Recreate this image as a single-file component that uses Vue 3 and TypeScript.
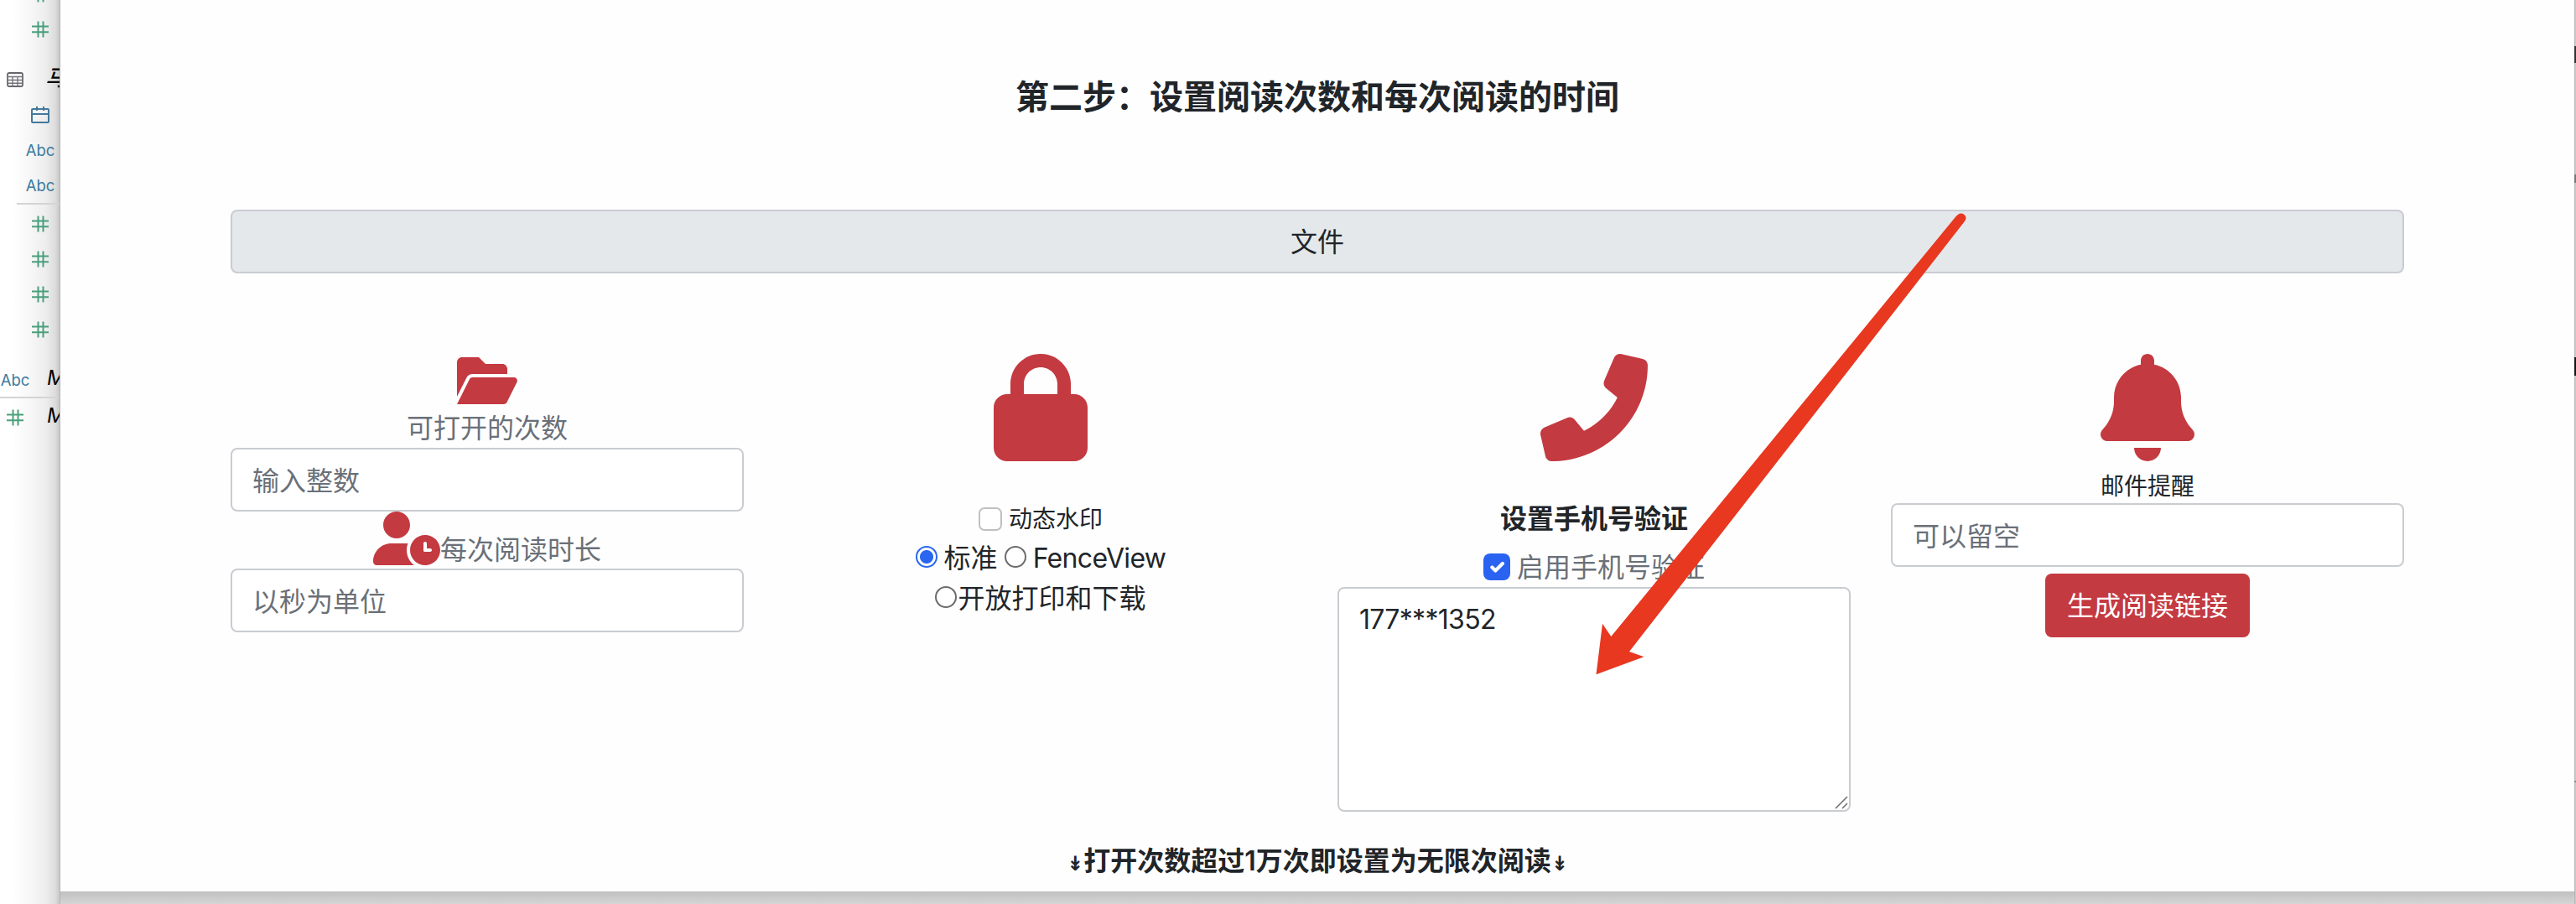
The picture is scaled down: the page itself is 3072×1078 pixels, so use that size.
<script setup lang="ts">
import { ref } from 'vue'

type FieldKind = 'hash' | 'abc' | 'date' | 'table' | 'rule' | 'gap'

interface FieldRow {
  kind: FieldKind
  height: number
  root?: boolean
  label?: string
}

const fields: FieldRow[] = [
  { kind: 'hash', height: 40 },
  { kind: 'hash', height: 43 },
  { kind: 'gap', height: 18 },
  { kind: 'table', height: 42, root: true, label: '马' },
  { kind: 'date', height: 42 },
  { kind: 'abc', height: 42 },
  { kind: 'abc', height: 42 },
  { kind: 'rule', height: 2 },
  { kind: 'gap', height: 2 },
  { kind: 'hash', height: 42 },
  { kind: 'hash', height: 42 },
  { kind: 'hash', height: 42 },
  { kind: 'hash', height: 42 },
  { kind: 'gap', height: 19 },
  { kind: 'abc', height: 40, root: true, label: 'M' },
  { kind: 'rule', height: 2, root: true },
  { kind: 'gap', height: 2 },
  { kind: 'hash', height: 42, root: true, label: 'M' },
]

const openCount = ref('')
const readSeconds = ref('')
const email = ref('')
const watermark = ref(false)
const verifyPhone = ref(true)
const phones = ref('177***1352')
const viewMode = ref<'standard' | 'fence' | 'print'>('standard')
</script>

<template>
  <div class="screen">
    <aside class="fields">
      <div
        v-for="(f, i) in fields"
        :key="i"
        class="field"
        :class="[f.kind, { root: f.root }]"
        :style="{ height: f.height + 'px' }"
      >
        <span v-if="f.kind !== 'gap' && f.kind !== 'rule'" class="glyph">
          <svg v-if="f.kind === 'hash'" width="20" height="20" viewBox="0 0 20 20">
            <path d="M7.5 .5v19M13.500 .5v19M0 6.500h20M0 13.300h20" stroke="#4a9f7c" stroke-width="2" fill="none" />
          </svg>
          <svg v-else-if="f.kind === 'date'" width="22" height="22" viewBox="0 0 22 22">
            <path d="M2 4h18q1 0 1 1v14q0 1-1 1H2q-1 0-1-1V5q0-1 1-1zM1 10h20M7 1v5M15 1v5" stroke="#43799a" stroke-width="2" fill="none" />
          </svg>
          <svg v-else-if="f.kind === 'table'" width="20" height="18" viewBox="0 0 20 18">
            <path d="M3 1h14q2 0 2 2v12q0 2-2 2H3q-2 0-2-2V3q0-2 2-2z" stroke="#69666b" stroke-width="1.800" fill="none" />
            <path d="M1 5.500h18M1 9.500h18M1 13.300h18M7 5v12M13 5v12" stroke="#77757a" stroke-width="1.400" />
          </svg>
          <span v-else class="abc-text">Abc</span>
        </span>
        <span v-if="f.label" class="name">{{ f.label }}</span>
      </div>
    </aside>

    <main class="dialog">
      <h4 class="title">第二步：设置阅读次数和每次阅读的时间</h4>
      <div class="file-bar">文件</div>

      <div class="columns">
        <section class="col">
          <svg class="icon folder" viewBox="0 0 576 512">
            <path d="M147.800 192H480V144C480 117.500 458.500 96 432 96h-160l-64-64h-160C21.490 32 0 53.490 0 80v328.400l90.540-181.100C101.400 205.600 123.400 192 147.800 192zM543.100 224H147.800C135.700 224 124.600 230.800 119.200 241.700L0 480h447.100c12.120 0 23.200-6.852 28.620-17.690l96-192C583.200 249 567.700 224 543.100 224z" />
          </svg>
          <div class="label">可打开的次数</div>
          <input v-model="openCount" class="control" placeholder="输入整数" />
          <div class="duration">
            <svg class="icon user" viewBox="0 0 640 512">
              <path d="M224 256c70.700 0 128-57.310 128-128S294.700 0 224 0C153.300 0 96 57.310 96 128S153.300 256 224 256zM320 368c0-22.500 4.200-44 11.900-63.800C316 303.300 290 304 274.700 304H173.300C77.610 304 0 381.600 0 477.300C0 496.500 15.520 512 34.660 512h357.400C348 480 320 427 320 368zM496 224c-79.600 0-144 64.400-144 144s64.400 144 144 144s144-64.400 144-144S575.600 224 496 224zM544 384h-54.300C484.400 384 480 379.600 480 374.300V304c0-8.800 7.200-16 16-16s16 7.200 16 16v48h32c8.800 0 16 7.200 16 16S552.800 384 544 384z" />
            </svg>
            <span class="label">每次阅读时长</span>
          </div>
          <input v-model="readSeconds" class="control" placeholder="以秒为单位" />
        </section>

        <section class="col">
          <svg class="icon lock" viewBox="0 0 448 512">
            <path d="M80 192V144C80 64.470 144.500 0 224 0C303.500 0 368 64.470 368 144V192H384C419.300 192 448 220.700 448 256V448C448 483.300 419.300 512 384 512H64C28.650 512 0 483.300 0 448V256C0 220.700 28.650 192 64 192H80zM144 192H304V144C304 99.820 268.200 64 224 64C179.800 64 144 99.820 144 144V192z" />
          </svg>
          <label class="choice watermark">
            <input v-model="watermark" type="checkbox" class="box" />
            <span>动态水印</span>
          </label>
          <div class="choices">
            <label class="choice">
              <input v-model="viewMode" type="radio" value="standard" class="radio" />
              <span>标准</span>
            </label>
            <label class="choice">
              <input v-model="viewMode" type="radio" value="fence" class="radio" />
              <span class="latin">FenceView</span>
            </label>
          </div>
          <label class="choice tight">
            <input v-model="viewMode" type="radio" value="print" class="radio" />
            <span>开放打印和下载</span>
          </label>
        </section>

        <section class="col">
          <svg class="icon phone" viewBox="0 0 512 512">
            <path d="M18.920 351.200l108.500-46.520c12.780-5.531 27.770-1.801 36.450 8.980l44.090 53.820c69.250-34 125.500-90.310 159.400-159.400l-53.810-44.040c-10.750-8.781-14.410-23.690-8.974-36.470l46.510-108.500c6.094-13.910 21.100-21.520 35.790-18.110l100.800 23.250c14.250 3.250 24.220 15.800 24.220 30.460c0 252.300-205.200 457.500-457.500 457.500c-14.670 0-27.180-9.968-30.450-24.220l-23.270-100.800C-2.571 372.400 5.018 357.200 18.920 351.200z" />
          </svg>
          <div class="heading">设置手机号验证</div>
          <label class="choice verify">
            <input v-model="verifyPhone" type="checkbox" class="toggle" />
            <span>启用手机号验证</span>
          </label>
          <div class="area">
            <textarea v-model="phones" class="control"></textarea>
            <svg class="grip" width="16" height="16" viewBox="0 0 16 16">
              <path d="M1 15L15 1M9 15l6-6" stroke="#6c6c6c" stroke-width="1.500" />
            </svg>
          </div>
        </section>

        <section class="col">
          <svg class="icon bell" viewBox="0 0 448 512">
            <path d="M256 32V51.200C329 66.030 384 130.600 384 208V226.800C384 273.900 401.300 319.200 432.500 354.400L439.900 362.700C448.300 372.200 450.400 385.600 445.200 397.100C440 408.600 428.600 416 416 416H32C19.400 416 7.971 408.600 2.809 397.100C-2.353 385.600-.2883 372.200 8.084 362.700L15.500 354.400C46.740 319.200 64 273.900 64 226.800V208C64 130.600 118.100 66.030 192 51.200V32C192 14.330 206.300 0 224 0C241.700 0 256 14.330 256 32zM224 512C207 512 190.700 505.300 178.700 493.300C166.700 481.300 160 464.100 160 448H288C288 464.100 281.300 481.300 269.300 493.300C257.300 505.300 240.100 512 224 512z" />
          </svg>
          <div class="mail-label">邮件提醒</div>
          <input v-model="email" class="control" placeholder="可以留空" />
          <button class="submit" type="button">生成阅读链接</button>
        </section>
      </div>

      <p class="note"><span class="arr">↡</span>打开次数超过1万次即设置为无限次阅读<span class="arr">↡</span></p>
    </main>

    <div class="edge">
      <i class="e1"></i><i class="e2"></i><i class="e3"></i><i class="e4"></i>
    </div>

    <svg class="pointer" width="460" height="580" viewBox="1900 240 460 580">
      <path d="M1903.500 804.300L1911 743.700L1921.300 759L2333 257.500Q2338 252.500 2342.500 256Q2346.500 259.500 2342.500 264.500L1943 777L1960.500 783.300Z" fill="#e83820" />
    </svg>
  </div>
</template>

<style>
body {
  margin: 0;
  background: #fff;
}
</style>

<style scoped>
.screen {
  position: relative;
  display: flex;
  width: 3072px;
  height: 1078px;
  overflow: hidden;
  background: linear-gradient(#c0c0c0 1063px, #d5d5d5 1078px);
  font-family: Inter, 'Noto Sans CJK SC', sans-serif;
  font-size: 32px;
  line-height: 48px;
  color: #212529;
}

.fields {
  box-sizing: border-box;
  width: 72px;
  height: 1078px;
  flex: none;
  overflow: hidden;
  background: linear-gradient(90deg, #fff 14px, #f7f7f7 36px, #eee 54px, #dcdcdc 66px, #cbcbcb 70px);
  border-right: 1px solid #b4b4b4;
}

.field {
  display: flex;
  align-items: center;
  width: 110px;
}

.field:first-child {
  margin-top: -27px;
}

.glyph {
  display: flex;
  justify-content: center;
  width: 36px;
  margin-left: 30px;
  flex: none;
}

.root .glyph {
  margin-left: 0;
}

.rule {
  margin-left: 20px;
  background: #d3d5d4;
}

.rule.root {
  margin-left: 0;
}

.abc-text {
  font: 18.500px/24px Inter, sans-serif;
  color: #3d7b9d;
}

.name {
  margin-left: 20px;
  padding-bottom: 4px;
  font-size: 24px;
  font-style: italic;
  color: #000;
}

.table .name {
  margin-left: 18px;
  font-size: 26px;
  font-weight: 500;
}

.dialog {
  box-sizing: border-box;
  width: 2998px;
  height: 1063px;
  padding: 92px 203px 0;
  flex: none;
  background: #fefefe;
  text-align: center;
}

.title {
  margin: 0 0 110px;
  font-size: 40px;
  line-height: 48px;
  font-weight: 600;
}

.file-bar {
  box-sizing: border-box;
  height: 76px;
  line-height: 73px;
  background: #e4e8eb;
  border: 2px solid #c9ccd2;
  border-radius: 8px;
}

.columns {
  display: flex;
  gap: 48px;
  height: 546px;
  padding-top: 96px;
}

.col {
  display: flex;
  flex-direction: column;
  align-items: center;
  width: 612px;
}

.icon {
  display: block;
  flex: none;
  fill: #c43a41;
}

.folder {
  width: 72px;
  height: 64px;
}

.user {
  width: 80px;
  height: 64px;
}

.lock,
.bell {
  width: 112px;
  height: 128px;
}

.phone {
  width: 128px;
  height: 128px;
}

.label {
  height: 48px;
  line-height: 50px;
  color: #6a7078;
}

.control {
  display: block;
  box-sizing: border-box;
  width: 612px;
  height: 76px;
  margin: 0;
  padding: 13px 24px 11px;
  border: 2px solid #c9ccd0;
  border-radius: 8px;
  background: #fff;
  font: inherit;
  line-height: 48px;
  color: #212529;
  outline: none;
  flex: none;
}

.control::placeholder {
  color: #6a7078;
  opacity: 1;
}

.duration {
  display: flex;
  height: 68px;
}

.duration .label {
  padding-top: 21px;
}

.choice {
  display: flex;
  align-items: center;
}

.choice input {
  appearance: none;
  box-sizing: border-box;
  display: block;
  margin: 0;
  flex: none;
}

.watermark {
  gap: 8px;
  height: 46px;
  margin-top: 46px;
  font-size: 28px;
}

.choice .box {
  width: 28px;
  height: 28px;
  border: 2px solid #c0c0c0;
  border-radius: 7px;
  background: #fff;
}

.choices {
  display: flex;
  gap: 8px;
}

.choices .choice {
  gap: 8px;
}

.latin {
  letter-spacing: -0.65px;
}

.choice .radio {
  width: 26px;
  height: 26px;
  margin-bottom: 4px;
  border: 2px solid #6c6c6c;
  border-radius: 50%;
  background: #fff;
}

.choice .radio:checked {
  border-color: #2a66f0;
  background: radial-gradient(circle, #2a66f0 7.500px, #fff 8.500px);
}

.tight {
  gap: 1px;
}

.heading {
  margin-top: 45px;
  font-weight: 600;
}

.verify {
  gap: 8px;
  height: 66px;
  color: #6a7078;
}

.verify .toggle {
  width: 32px;
  height: 32px;
  border-radius: 8px;
  background: #2a63f2 url("data:image/svg+xml,%3Csvg xmlns='http://www.w3.org/2000/svg' viewBox='0 0 20 20'%3E%3Cpath fill='none' stroke='%23fff' stroke-linecap='round' stroke-linejoin='round' stroke-width='2.600' d='M6.500 10.300l2.500 2.500l5.300-5.300'/%3E%3C/svg%3E") center / 100% 100%;
}

.verify span {
  padding-top: 1px;
}

.area {
  position: relative;
  margin-top: -9px;
}

.area .control {
  height: 268px;
  letter-spacing: -0.7px;
  resize: none;
}

.grip {
  position: absolute;
  right: 3px;
  bottom: 3px;
}

.mail-label {
  height: 50px;
  line-height: 60px;
  font-size: 28px;
}

.submit {
  width: 244px;
  height: 76px;
  margin: 8px 0 0;
  padding: 1px 0 0;
  border: 0;
  border-radius: 8px;
  background: #c43a41;
  font: inherit;
  color: #fff;
}

.note {
  margin: 35px 0 0;
  font-weight: 600;
}

.arr {
  font-family: 'DejaVu Sans', sans-serif;
  font-size: 24px;
}

.edge {
  display: flex;
  flex-direction: column;
  width: 2px;
  background: linear-gradient(90deg, #b6b6b6 1px, #cacaca 1px);
}

.edge i {
  display: block;
  height: 20px;
  background: #333;
}

.edge .e1 {
  margin-top: 55px;
}

.edge .e2 {
  height: 10px;
  margin-top: 133px;
  background: #777;
}

.edge .e3 {
  height: 22px;
  margin-top: 208px;
  background: #151515;
}

.edge .e4 {
  height: 2px;
  margin-top: 483px;
  background: #888;
}

.pointer {
  position: absolute;
  left: 1900px;
  top: 240px;
}
</style>
